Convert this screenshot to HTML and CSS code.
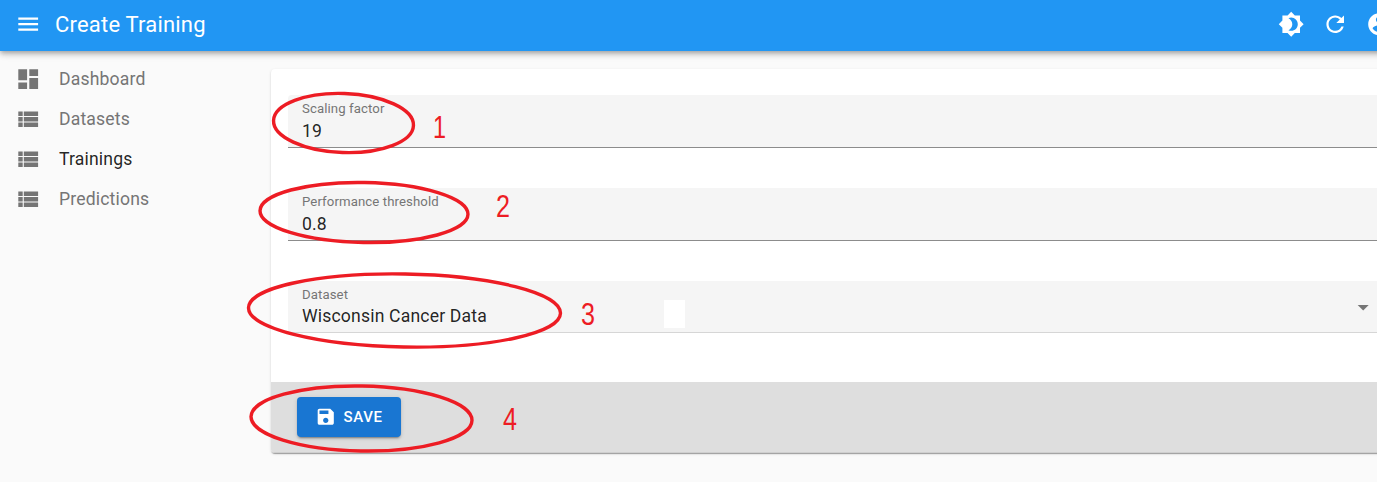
FILE: index.html
```html
<!DOCTYPE html>
<html lang="en">
<head>
<meta charset="utf-8">
<title>Create Training</title>
<link rel="stylesheet" href="styles.css">
</head>
<body>
<div class="page">
  <header class="appbar">
    <svg class="icon menu-icon" viewBox="0 0 24 24"><path d="M3 18h18v-2H3v2zm0-5h18v-2H3v2zm0-7v2h18V6H3z"/></svg>
    <h1 class="title">Create Training</h1>
    <div class="actions">
      <svg class="icon" viewBox="0 0 24 24"><path d="M20 8.69V4h-4.69L12 .69 8.69 4H4v4.69L.69 12 4 15.31V20h4.69L12 23.31 15.31 20H20v-4.69L23.31 12 20 8.69zM12 18c-.89 0-1.74-.2-2.5-.55C11.56 16.5 13 14.42 13 12s-1.44-4.5-3.5-5.45C10.26 6.2 11.11 6 12 6c3.31 0 6 2.69 6 6s-2.69 6-6 6z"/></svg>
      <svg class="icon" viewBox="0 0 24 24"><path d="M17.65 6.35C16.2 4.9 14.21 4 12 4c-4.42 0-7.99 3.58-7.99 8s3.57 8 7.99 8c3.73 0 6.84-2.55 7.73-6h-2.08c-.82 2.33-3.04 4-5.65 4-3.31 0-6-2.69-6-6s2.69-6 6-6c1.66 0 3.14.69 4.22 1.78L13 11h7V4l-2.35 2.35z"/></svg>
      <svg class="icon" viewBox="0 0 24 24"><path d="M12 2C6.48 2 2 6.48 2 12s4.48 10 10 10 10-4.48 10-10S17.52 2 12 2zm0 3c1.66 0 3 1.34 3 3s-1.34 3-3 3-3-1.34-3-3 1.34-3 3-3zm0 14.2c-2.5 0-4.71-1.28-6-3.22.03-1.99 4-3.08 6-3.08 1.99 0 5.97 1.09 6 3.08-1.29 1.94-3.5 3.22-6 3.22z"/></svg>
    </div>
  </header>
  <div class="shell">
    <nav class="sidebar">
      <a class="nav-item">
        <svg class="icon" viewBox="0 0 24 24"><path d="M3 13h8V3H3v10zm0 8h8v-6H3v6zm10 0h8V11h-8v10zm0-18v6h8V3h-8z"/></svg>
        <span>Dashboard</span>
      </a>
      <a class="nav-item">
        <svg class="icon" viewBox="0 0 24 24"><path d="M3 14h4v-4H3v4zm0 5h4v-4H3v4zM3 9h4V5H3v4zm5 5h13v-4H8v4zm0 5h13v-4H8v4zM8 5v4h13V5H8z"/></svg>
        <span>Datasets</span>
      </a>
      <a class="nav-item active">
        <svg class="icon" viewBox="0 0 24 24"><path d="M3 14h4v-4H3v4zm0 5h4v-4H3v4zM3 9h4V5H3v4zm5 5h13v-4H8v4zm0 5h13v-4H8v4zM8 5v4h13V5H8z"/></svg>
        <span>Trainings</span>
      </a>
      <a class="nav-item">
        <svg class="icon" viewBox="0 0 24 24"><path d="M3 14h4v-4H3v4zm0 5h4v-4H3v4zM3 9h4V5H3v4zm5 5h13v-4H8v4zm0 5h13v-4H8v4zM8 5v4h13V5H8z"/></svg>
        <span>Predictions</span>
      </a>
    </nav>
    <main class="content">
      <section class="card">
        <form class="form">
          <div class="field">
            <div class="field-label">Scaling factor</div>
            <div class="field-value">19</div>
          </div>
          <div class="field">
            <div class="field-label">Performance threshold</div>
            <div class="field-value">0.8</div>
          </div>
          <div class="field field-select">
            <div class="field-label">Dataset</div>
            <div class="field-value">Wisconsin Cancer Data</div>
            <svg class="icon caret" viewBox="0 0 24 24"><path d="M7 10l5 5 5-5z"/></svg>
          </div>
        </form>
        <div class="toolbar">
          <button class="save" type="button">
            <svg class="icon save-icon" viewBox="0 0 24 24"><path d="M17 3H5c-1.11 0-2 .9-2 2v14c0 1.1.89 2 2 2h14c1.1 0 2-.9 2-2V7l-4-4zm-5 16c-1.66 0-3-1.34-3-3s1.34-3 3-3 3 1.34 3 3-1.34 3-3 3zm3-10H5V5h10v4z"/></svg>
            <span>Save</span>
          </button>
        </div>
      </section>
    </main>
  </div>
  <svg class="annotations" viewBox="0 0 1377 482">
    <rect class="patch" x="664" y="300" width="21" height="28"/>
    <ellipse class="ring" cx="343.5" cy="123" rx="70" ry="29.5" transform="rotate(2 343.5 123)"/>
    <ellipse class="ring" cx="364" cy="212.5" rx="104" ry="30" transform="rotate(1 364 212.5)"/>
    <ellipse class="ring" cx="404.5" cy="310.5" rx="156" ry="36.5" transform="rotate(1 404.5 310.5)"/>
    <ellipse class="ring" cx="361.5" cy="418.5" rx="110.5" ry="32.5" transform="rotate(1 361.5 418.5)"/>
    <text class="num" x="433" y="138" textLength="13" lengthAdjust="spacingAndGlyphs">1</text>
    <text class="num" x="496" y="217" textLength="14" lengthAdjust="spacingAndGlyphs">2</text>
    <text class="num" x="581" y="325" textLength="14" lengthAdjust="spacingAndGlyphs">3</text>
    <text class="num" x="503" y="430" textLength="14" lengthAdjust="spacingAndGlyphs">4</text>
  </svg>
</div>
</body>
</html>
```
FILE: styles.css
```css
* { box-sizing: border-box; }
html, body { margin: 0; height: 100%; overflow: hidden; background: #fafafa; }
body { font-family: Roboto, "Noto Sans", sans-serif; color: rgba(0,0,0,.87); }
.page { position: relative; width: 1400px; height: 482px; overflow: hidden; }
.icon { display: block; width: 26.4px; height: 26.4px; flex: none; fill: currentColor; }
.appbar {
  position: relative;
  z-index: 2;
  display: flex;
  align-items: center;
  height: 51px;
  padding: 0 0 3px 15px;
  background: #2196f3;
  color: #fff;
  box-shadow: 0 2px 4px -1px rgba(0,0,0,.2), 0 4px 5px rgba(0,0,0,.14), 0 1px 10px rgba(0,0,0,.12);
}
.title { margin: 2px 0 0 13.6px; font-size: 22px; font-weight: 400; line-height: 1; letter-spacing: .2px; }
.actions { display: flex; gap: 17.6px; margin-left: auto; padding-right: 7.7px; }
.shell { display: flex; }
.sidebar { width: 271px; flex: none; padding-top: 8.5px; }
.nav-item { display: flex; align-items: center; gap: 17.6px; height: 39.8px; padding-left: 15px; color: #757575; font-size: 17.6px; letter-spacing: .16px; }
.nav-item.active span { color: rgba(0,0,0,.87); }
.content { flex: 1; padding-top: 18px; }
.card { background: #fff; border-radius: 4px; box-shadow: 0 2px 1px -1px rgba(0,0,0,.2), 0 1px 1px rgba(0,0,0,.14), 0 1px 3px rgba(0,0,0,.12); overflow: hidden; }
.form { display: flex; flex-direction: column; gap: 40px; padding: 26px 0 49px 17px; }
.field { position: relative; height: 53px; padding: 6px 14px 0; background: #f5f5f5; border-bottom: 1px solid #8c8c8c; border-radius: 4px 4px 0 0; }
.field-select { height: 52px; border-bottom-color: #d6d6d6; }
.field-select .field-value { margin-top: 3px; }
.field-label { font-size: 13.2px; line-height: 15px; color: #757575; letter-spacing: .1px; }
.field-value { margin-top: 4px; font-size: 17.6px; line-height: 22px; letter-spacing: .17px; }
.caret { position: absolute; right: 24px; top: 13px; color: #757575; }
.toolbar { display: flex; align-items: center; height: 71px; padding: 0 26px; background: #dedede; border-bottom: 1px solid #cfcfcf; }
.save { display: flex; align-items: center; gap: 7px; width: 104px; height: 40px; padding: 0 0 0 18px; border: 0; border-radius: 4px; background: #1976d2; color: #fff; font: 500 15px/1 Roboto, sans-serif; letter-spacing: .65px; text-transform: uppercase; box-shadow: 0 3px 1px -2px rgba(0,0,0,.2), 0 2px 2px rgba(0,0,0,.14), 0 1px 5px rgba(0,0,0,.12); }
.save-icon { width: 21.5px; height: 21.5px; }
.annotations { position: absolute; z-index: 3; left: 0; top: 0; width: 1377px; height: 482px; pointer-events: none; }
.patch { fill: #fff; }
.ring { fill: none; stroke: #ed1c24; stroke-width: 3.4; }
.num { fill: #ed1c24; font-family: "Liberation Sans", sans-serif; font-size: 31px; }
```
